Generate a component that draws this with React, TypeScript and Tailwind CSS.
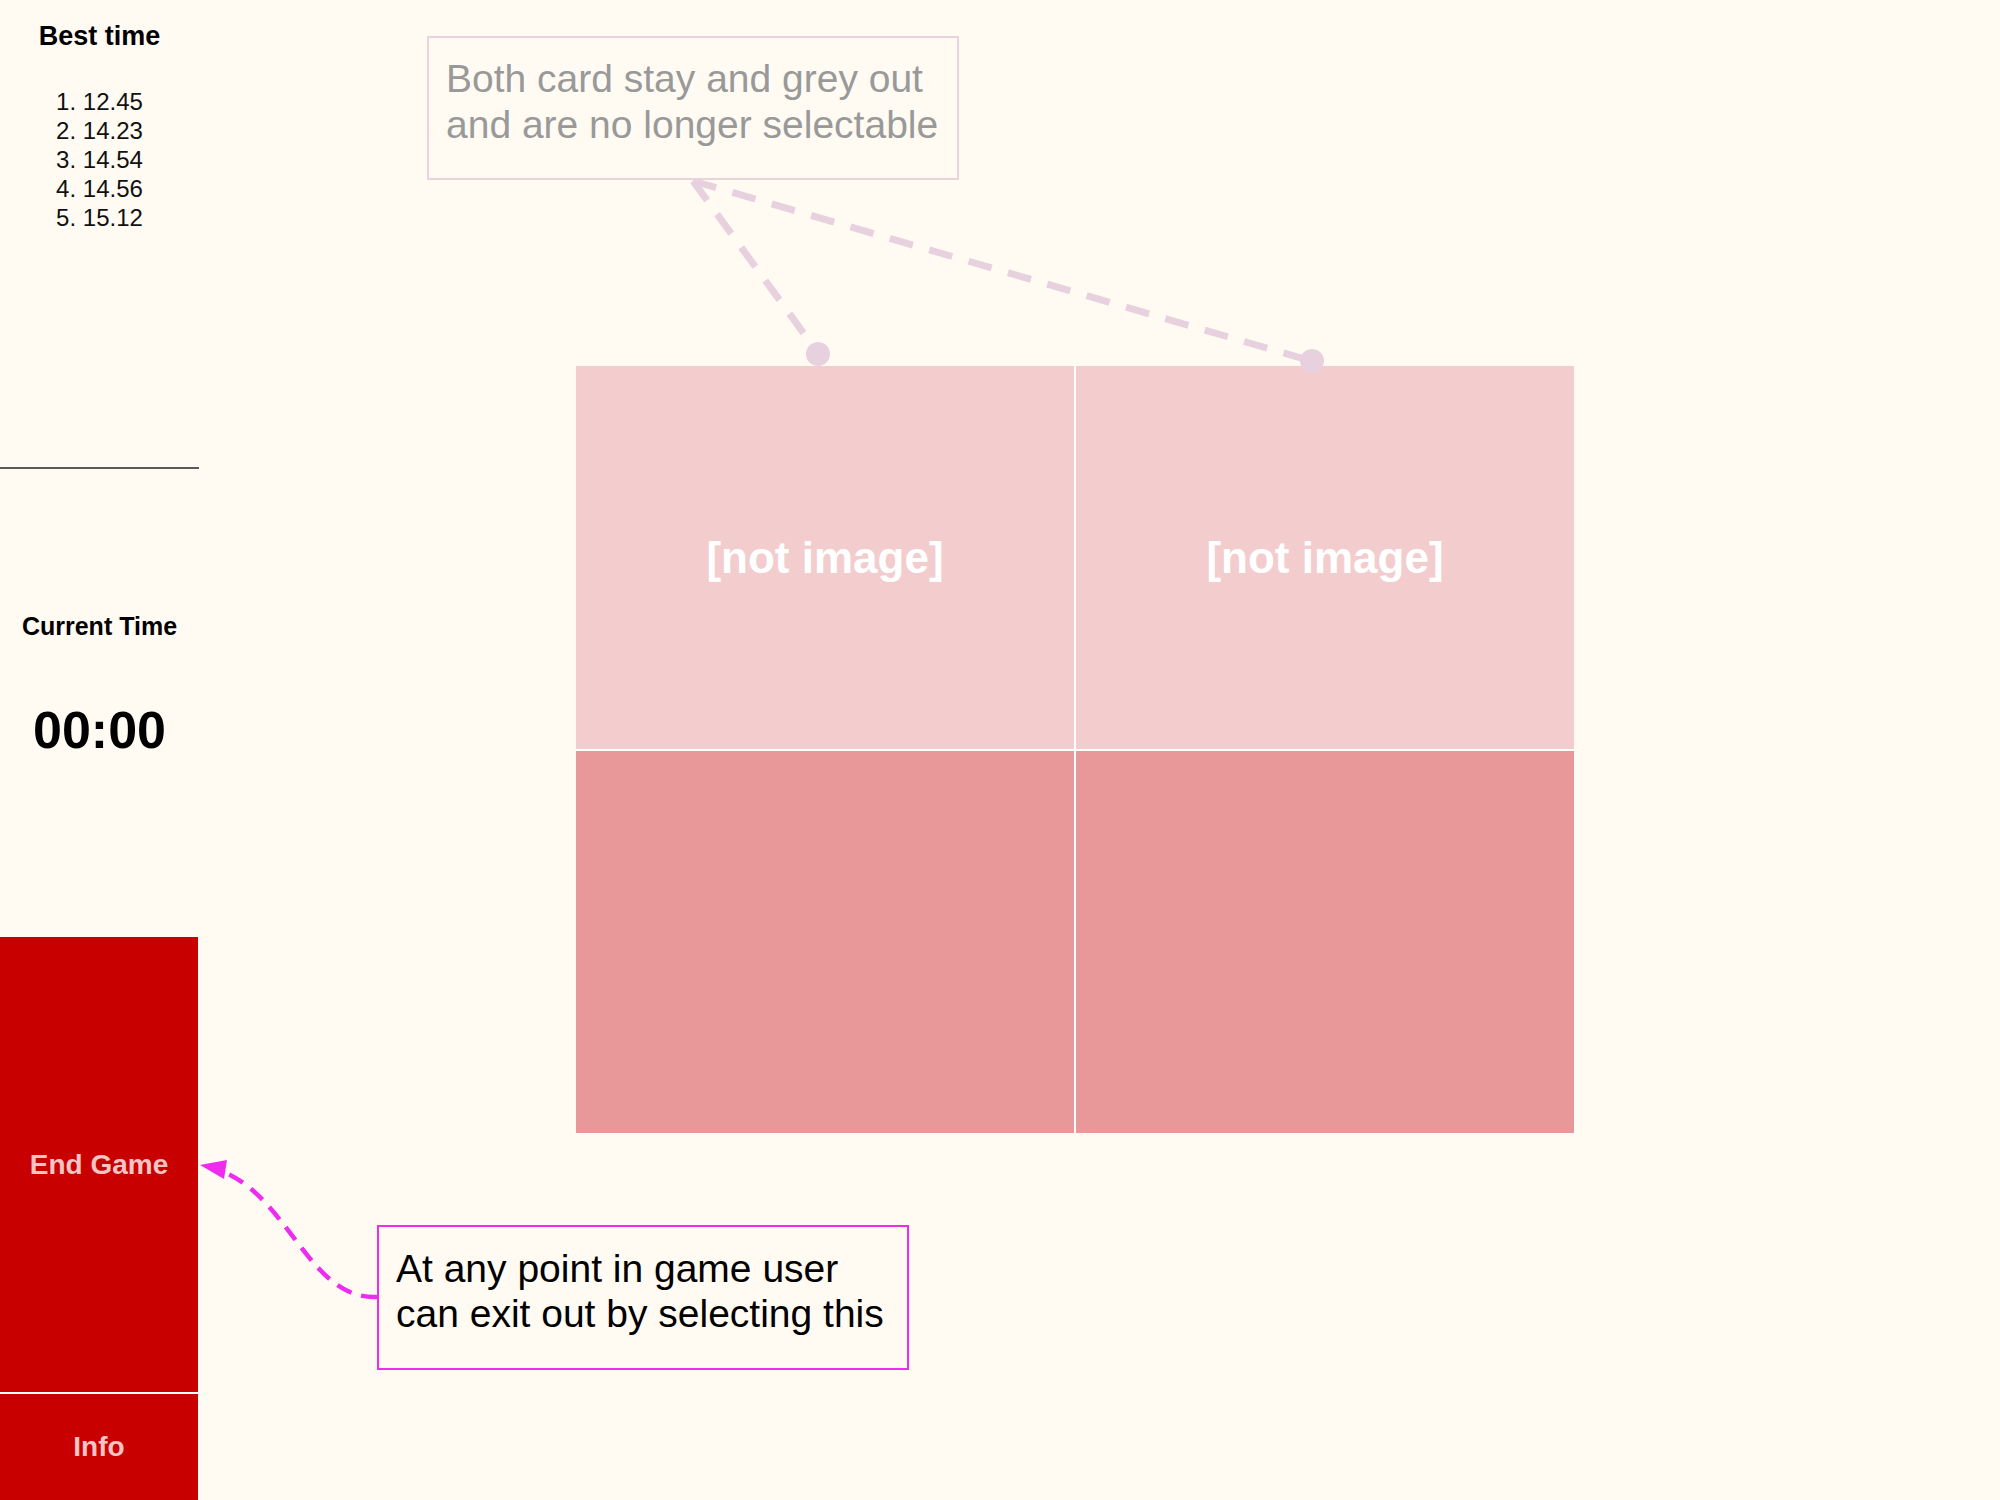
const bestTimes = ["12.45", "14.23", "14.54", "14.56", "15.12"];

function Card({ light, label }: { light: boolean; label?: string }) {
  return (
    <div
      className={
        light
          ? "flex items-center justify-center bg-[#F3CDCD]"
          : "flex items-center justify-center bg-[#E99899]"
      }
    >
      {label ? (
        <span className="text-[44px] leading-[50px] font-bold text-white">{label}</span>
      ) : null}
    </div>
  );
}

export default function App() {
  return (
    <div className="relative flex w-[2000px] h-[1500px] overflow-hidden bg-[#FFFBF3] font-['Liberation_Sans',Arial,sans-serif] text-black">
      <aside className="flex w-[199px] shrink-0 flex-col">
        <section className="flex h-[469px] flex-col items-center border-b-2 border-[#5a5a5a] pt-[21px]">
          <h2 className="text-[27px] leading-[31px] font-bold">Best time</h2>
          <ol className="mt-[35px] text-[24px] leading-[29px] text-[#111]">
            {bestTimes.map((t, i) => (
              <li key={i}>
                {i + 1}. {t}
              </li>
            ))}
          </ol>
        </section>
        <section className="flex h-[468px] flex-col items-center pt-[142px]">
          <div className="text-[25px] leading-[30px] font-bold">Current Time</div>
          <div className="mt-[63px] text-[52px] leading-[52px] font-bold">00:00</div>
        </section>
        <button className="flex h-[457px] w-[198px] items-center justify-center border-b-2 border-white bg-[#C80000] text-[28px] font-bold text-[#F6C4C4]">
          End Game
        </button>
        <button className="flex w-[198px] flex-1 items-center justify-center bg-[#C80000] text-[28px] font-bold text-[#F6C4C4]">
          Info
        </button>
      </aside>

      <main className="flex-1 pl-[377px] pt-[366px]">
        <div className="grid w-[998px] grid-cols-[498px_498px] grid-rows-[383px_382px] gap-[2px] bg-white">
          <Card light label="[not image]" />
          <Card light label="[not image]" />
          <Card light={false} />
          <Card light={false} />
        </div>
      </main>

      <div className="absolute left-[427px] top-[36px] h-[144px] w-[532px] border-2 border-[#EBD3DE] pl-[17px] pt-[18px] text-[39px] leading-[46px] whitespace-nowrap text-[#999999]">
        Both card stay and grey out
        <br />
        and are no longer selectable
      </div>

      <div className="absolute left-[377px] top-[1225px] h-[145px] w-[532px] border-2 border-[#EE2BEE] pl-[17px] pt-[19px] text-[39px] leading-[45px] whitespace-nowrap text-black">
        At any point in game user
        <br />
        can exit out by selecting this
      </div>

      <svg
        className="pointer-events-none absolute left-0 top-0"
        width="2000"
        height="1500"
        viewBox="0 0 2000 1500"
      >
        <g stroke="#E8D1DE" strokeWidth="7" strokeDasharray="24 17" fill="none">
          <line x1="693" y1="181" x2="818" y2="353" />
          <line x1="693" y1="181" x2="1311" y2="361" />
        </g>
        <circle cx="818" cy="354" r="12" fill="#E8D1DE" />
        <circle cx="1312" cy="361" r="12" fill="#E8D1DE" />
        <path
          d="M377 1297 C 310 1300, 290 1200, 224 1172"
          stroke="#EE2BEE"
          strokeWidth="4.5"
          strokeDasharray="16 10"
          fill="none"
        />
        <polygon points="200,1165 227,1160 224,1179" fill="#EE2BEE" />
      </svg>
    </div>
  );
}
